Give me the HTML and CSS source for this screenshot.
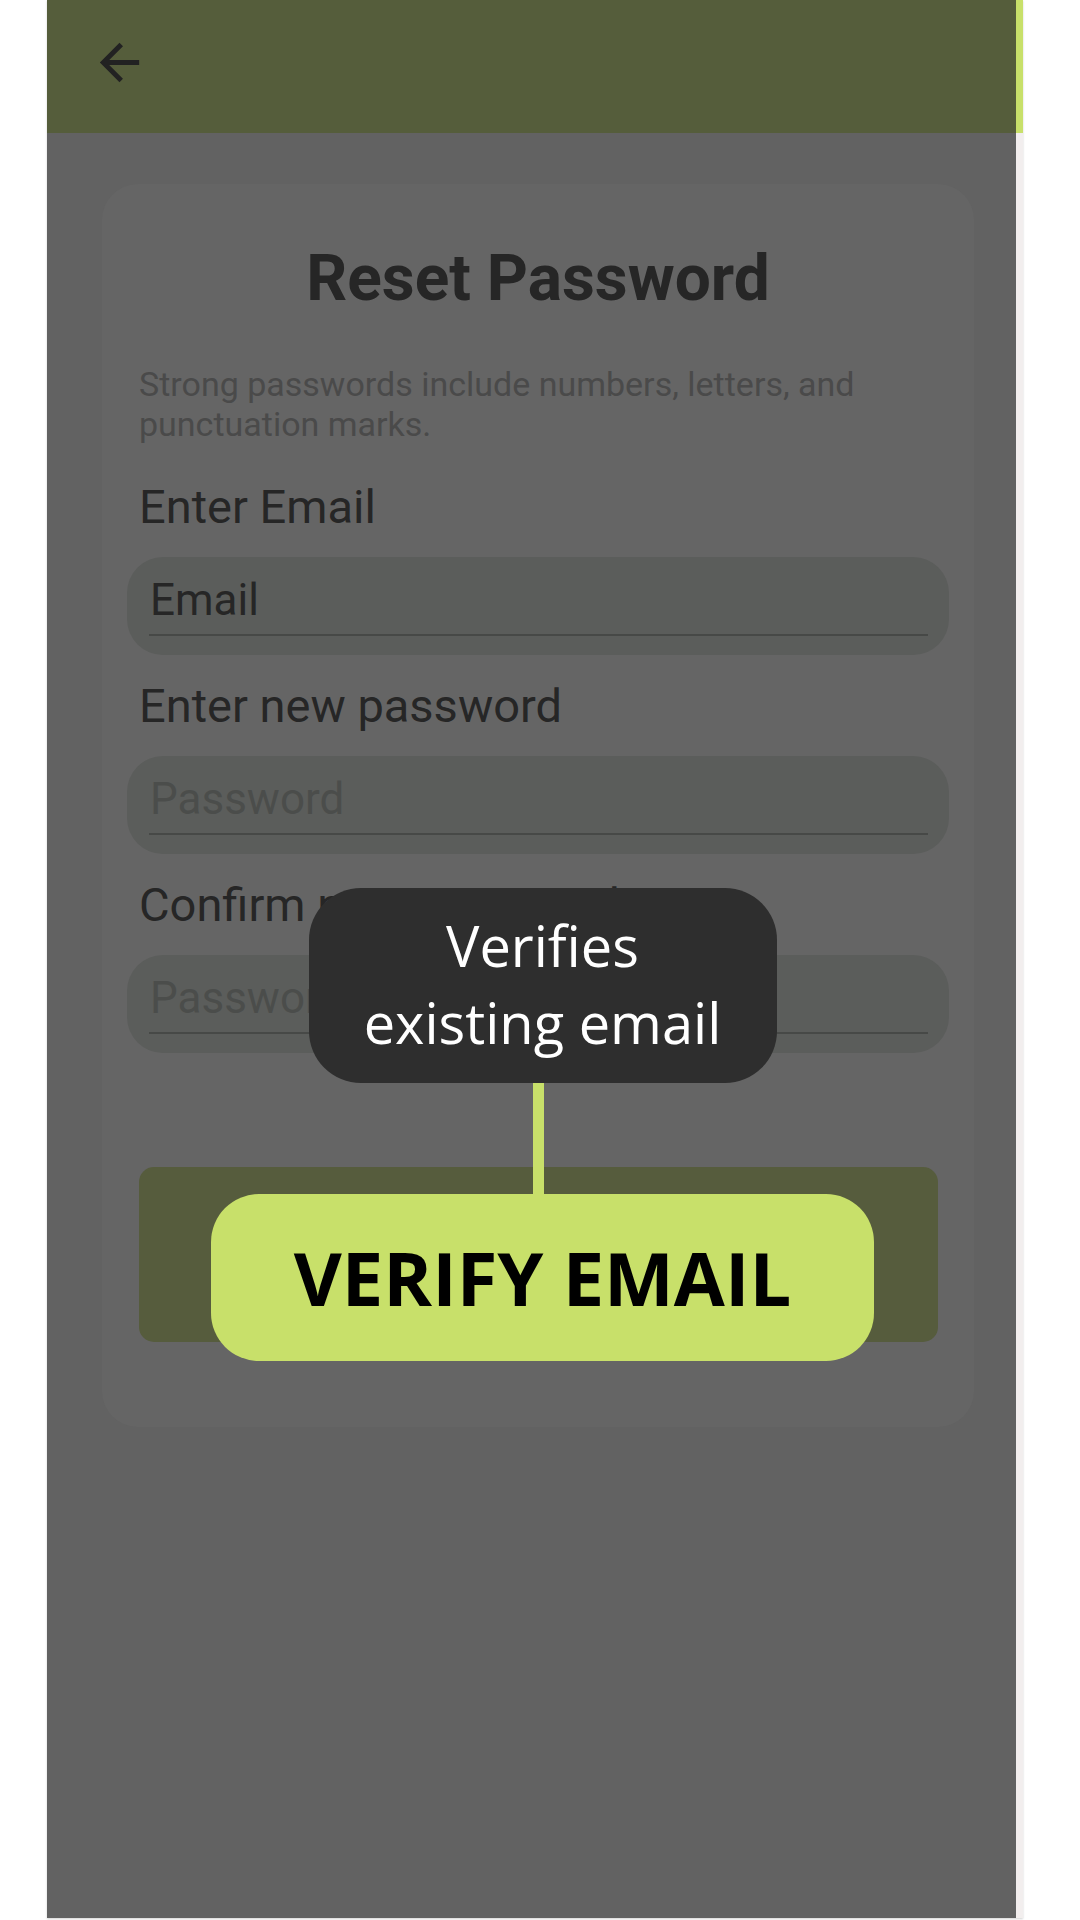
FILE: index.html
```html
<!DOCTYPE html>
<html lang="en">
<head>
<meta charset="utf-8">
<title>Reset Password</title>
<link rel="stylesheet" href="styles.css">
</head>
<body>
<div class="phone">
  <header class="topbar">
    <svg class="back" viewBox="0 0 24 24" aria-label="Back"><path d="M20 11H7.83l5.59-5.59L12 4l-8 8 8 8 1.41-1.41L7.83 13H20v-2z"/></svg>
  </header>
  <main class="screen">
    <section class="card">
      <h1 class="title">Reset Password</h1>
      <p class="hint">Strong passwords include numbers, letters, and punctuation marks.</p>
      <div class="field">
        <label class="label">Enter Email</label>
        <div class="input"><span class="value">Email</span></div>
      </div>
      <div class="field">
        <label class="label">Enter new password</label>
        <div class="input"><span class="placeholder">Password</span></div>
      </div>
      <div class="field">
        <label class="label">Confirm new password</label>
        <div class="input"><span class="placeholder">Password</span></div>
      </div>
      <button class="submit" aria-label="Verify email"></button>
    </section>
  </main>
  <div class="annotation">
    <div class="tip">Verifies<br>existing email</div>
    <div class="connector"></div>
    <div class="callout">VERIFY EMAIL</div>
  </div>
</div>
</body>
</html>
```

FILE: styles.css
```css
* { box-sizing: border-box; }
html, body { margin: 0; padding: 0; background: #ffffff; }
body { width: 1080px; height: 1920px; overflow: hidden; font-family: Roboto, "Liberation Sans", sans-serif; }

.phone {
  position: relative;
  margin-left: 47px;
  width: 976px;
  height: 1918px;
  display: flex;
  flex-direction: column;
  box-shadow: 0 1px 2px rgba(0,0,0,0.18);
}

.topbar {
  height: 133px;
  flex: none;
  background: #555d3b;
  border-right: 7px solid #c8e06a;
  padding: 33px 0 0 43px;
}
.back { width: 59px; height: 59px; fill: #222222; display: block; }

.screen {
  flex: 1;
  background: #626262;
  border-right: 7px solid #f2eeee;
  padding: 51px 42px 0 55px;
}

.card {
  background: #656565;
  border-radius: 36px;
  padding: 57px 25px 85px 25px;
  display: flex;
  flex-direction: column;
}

.title {
  margin: 0;
  font-family: Roboto, sans-serif;
  font-weight: 700;
  font-size: 64px;
  line-height: 75px;
  color: #262626;
  text-align: center;
}

.hint {
  margin: 48px 0 35px 12px;
  font-size: 34px;
  line-height: 40px;
  color: #4a4a4a;
  max-width: 740px;
}

.field { display: flex; flex-direction: column; margin-bottom: 23px; }

.label {
  margin: 0 0 23px 12px;
  font-size: 47px;
  line-height: 55px;
  color: #262626;
}

.input {
  height: 98px;
  background: #5b5d5b;
  border-radius: 36px;
  padding: 17px 21px 19px 22px;
}
.input span {
  display: block;
  font-size: 44px;
  line-height: 52px;
  padding: 0 0 8px 1px;
  border-bottom: 2px solid #474947;
}
.value { color: #262626; }
.placeholder { color: #4b4d4b; }

.submit {
  margin: 91px 11px 0 12px;
  height: 175px;
  border: none;
  border-radius: 15px;
  background: #565c3d;
}

.annotation {
  position: absolute;
  left: 164px;
  top: 888px;
  width: 663px;
  display: flex;
  flex-direction: column;
  align-items: center;
}

.tip {
  width: 468px;
  height: 195px;
  background: #2e2e2e;
  border-radius: 52px;
  padding-top: 19px;
  color: #ffffff;
  font-family: "Open Sans", sans-serif;
  font-size: 56px;
  line-height: 77px;
  text-align: center;
}

.connector {
  width: 11px;
  height: 111px;
  background: #c8e06a;
  margin-right: 8px;
}

.callout {
  width: 663px;
  height: 167px;
  background: #c8e06a;
  border-radius: 48px;
  display: flex;
  align-items: center;
  justify-content: center;
  font-family: "Open Sans", sans-serif;
  font-weight: 700;
  font-size: 74px;
  color: #000000;
}
```
